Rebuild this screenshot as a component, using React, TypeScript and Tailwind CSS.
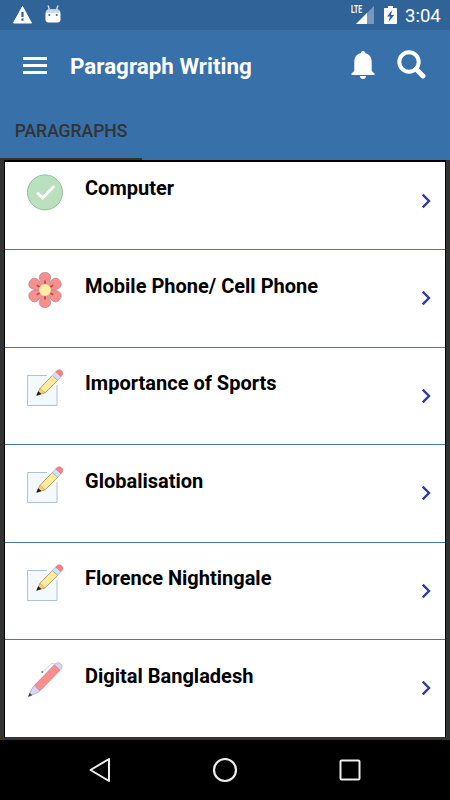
import React from 'react';

type IconName = 'check' | 'flower' | 'note' | 'pen';

const paragraphs: { title: string; icon: IconName }[] = [
  { title: 'Computer', icon: 'check' },
  { title: 'Mobile Phone/ Cell Phone', icon: 'flower' },
  { title: 'Importance of Sports', icon: 'note' },
  { title: 'Globalisation', icon: 'note' },
  { title: 'Florence Nightingale', icon: 'note' },
  { title: 'Digital Bangladesh', icon: 'pen' },
];

function CheckIcon() {
  return (
    <svg width="40" height="40" viewBox="0 0 40 40" fill="none">
      <circle cx="20" cy="19.4" r="17.5" fill="#bae0bd" stroke="#8fc2a0" />
      <path d="M12 19.400l5.600 5.600L29.300 13" stroke="#fff" strokeWidth="2.8" />
    </svg>
  );
}

function FlowerIcon() {
  const angles = [0, 60, 120, 180, 240, 300];
  return (
    <svg width="40" height="40" viewBox="0 0 40 40">
      {angles.map((a) => (
        <g key={a} transform={`rotate(${a} 20 20)`}>
          <path
            d="M20 18C17 14 14.400 10.800 14.400 7.500C14.400 4.300 16.800 2.400 20 2.400C23.200 2.400 25.600 4.300 25.600 7.500C25.600 10.800 23 14 20 18Z"
            fill="#f78f8f"
            stroke="#c08088"
            strokeWidth="0.7"
          />
          <path d="M20 10.500v4" stroke="#c74343" strokeWidth="1.700" />
        </g>
      ))}
      <circle cx="20" cy="20" r="6" fill="#ffeea3" stroke="#f0b080" strokeWidth="0.5" />
    </svg>
  );
}

function NoteIcon() {
  return (
    <svg width="40" height="40" viewBox="0 0 40 40" fill="none">
      <path d="M2.500 7.500h29.500v30H2.500z" fill="#f3f9fd" />
      <path d="M23 7.500H2.500v30H32V17" stroke="#aac4d6" />
      <path d="M22 7h10.500v10" stroke="#fff" strokeWidth="2" />
      <path d="M15 20.300L27.300 7.500l5.500 4.800-12.600 12.400-8.200 2.500z" fill="#ffeb9c" stroke="#a9884f" strokeWidth="0.8" />
      <path d="M15 20.300l5.200 4.400-8.200 2.500z" fill="#f5ce85" stroke="#a9884f" strokeWidth="0.4" />
      <path d="M13.200 23.300l3.300 2.600-5.300 1.900z" fill="#1d1d25" />
      <path d="M27.300 7.500l3.400-3.700 5.300 4.900-3.200 3.600z" fill="#cfe0f5" stroke="#9cb5cb" strokeWidth="0.6" />
      <path d="M30.700 3.800l1.500-1.300c1.500-1.100 3.200-.9 4.500.4 1.300 1.300 1.500 2.900.4 4.400l-1.100 1.400z" fill="#f77f85" stroke="#d2767b" strokeWidth="0.6" />
    </svg>
  );
}

function PenIcon() {
  return (
    <svg width="40" height="40" viewBox="0 0 40 40" fill="none">
      <path d="M29.300 5c1.700-2.500 4.100-2.900 6.200-1.300 2.300 1.800 2 4.300-.5 6.600z" fill="#dcd5f2" stroke="#a597c7" strokeWidth="0.6" />
      <path d="M9.300 25.500L29.300 5l5.700 5.300L15 30.800z" fill="#f98f8f" stroke="#bd7587" strokeWidth="0.7" />
      <path d="M9.300 25.500C6.800 28 5.500 31.500 4.300 35.500c3.900-.8 8.200-2.200 10.700-4.700z" fill="#dcd5f2" stroke="#a597c7" strokeWidth="0.7" />
      <path d="M4.800 33.300L3.400 36.600l3.300-1.300z" fill="#34343f" stroke="#34343f" strokeWidth="0.5" />
      <path d="M30.500 4.500c-1.400-1.700-3.200-1.700-4.700-.3L17.500 12" stroke="#cdc7da" strokeWidth="0.9" />
      <circle cx="17.300" cy="12" r="1" fill="#78708c" />
    </svg>
  );
}

const icons: Record<IconName, () => React.JSX.Element> = {
  check: CheckIcon,
  flower: FlowerIcon,
  note: NoteIcon,
  pen: PenIcon,
};

function StatusBar() {
  return (
    <div className="h-[30px] bg-[#306498] flex items-center justify-between pl-3 pr-[10px]">
      <div className="flex items-center gap-3">
        <svg width="21" height="20" viewBox="0 0 21 20">
          <path d="M10.500 1.500L19.500 18H1.500z" fill="#fff" stroke="#fff" strokeLinejoin="round" />
          <path d="M9.400 7h2.200v5H9.400zM9.400 13.500h2.200v2.200H9.400z" fill="#306498" />
        </svg>
        <svg width="16" height="20" viewBox="0 0 16 20">
          <path d="M3 .5l1.500 4M13 .5l-1.500 4" stroke="#dbe6f0" strokeWidth="1.300" />
          <path d="M.500 9c0-3 1.500-4.500 3.500-4.500h8c2 0 3.500 1.500 3.500 4.500v5.500c0 1.800-1.200 3-3 3h-9c-1.800 0-3-1.200-3-3z" fill="#fff" />
          <path d="M.700 7.800C1.200 5.500 2.300 4.300 4 4.300h8c1.700 0 2.800 1.200 3.300 3.500z" fill="#c5d7e8" />
          <circle cx="4.300" cy="10" r="1" fill="#306498" />
          <circle cx="11.700" cy="10" r="1" fill="#306498" />
        </svg>
      </div>
      <div className="flex items-center">
        <div className="flex items-start mr-[10px]">
          <span className="w-[5px] -mt-px text-white text-[10px] leading-[12px] font-bold origin-left scale-x-[.68] whitespace-nowrap">LTE</span>
          <svg width="18" height="20" viewBox="0 0 18 20">
            <path d="M18 1v18H0z" fill="#7699bc" />
            <path d="M11 8v11H0z" fill="#fff" />
            <path d="M0 0h8v9.500H0z" fill="none" />
          </svg>
        </div>
        <svg width="13" height="20" viewBox="0 0 13 20" className="mr-2">
          <path d="M4 1h5v2h3c.6 0 1 .4 1 1v14c0 .6-.4 1-1 1H1c-.6 0-1-.4-1-1V4c0-.6.400-1 1-1h3z" fill="#fff" />
          <path d="M8.300 5L3 11.500h3L4.500 17l5.700-7H7z" fill="#306498" />
        </svg>
        <span className="mt-px text-white text-[18.500px] leading-5 w-[35px]">3:04</span>
      </div>
    </div>
  );
}

function Header() {
  return (
    <header className="h-[130px] bg-[#3870a9] flex flex-col">
      <div className="h-[70px] flex items-center pl-[23px] pr-[24px]">
        <div className="w-6 flex flex-col gap-1">
          <div className="h-[3px] bg-white" />
          <div className="h-[3px] bg-white" />
          <div className="h-[3px] bg-white" />
        </div>
        <h1 className="ml-[23px] mt-[3px] flex-1 whitespace-nowrap text-white font-bold text-[22.400px]">Paragraph Writing</h1>
        <svg width="24" height="28" viewBox="0 0 24 28" fill="#fff" className="mr-[22px]">
          <path d="M12 0c1.300 0 2 .9 2 2.100 4.300 1 6.700 4.300 6.700 9V20l2.800 2.400V24H.5v-1.600L3.300 20v-8.900c0-4.700 2.400-8 6.700-9C10 .9 10.700 0 12 0z" />
          <path d="M8.800 25h6.400c-.3 1.800-1.500 3-3.200 3s-2.900-1.200-3.200-3z" />
        </svg>
        <svg width="29" height="29" viewBox="0 0 29 29" fill="none" stroke="#fff" className="-mt-px">
          <circle cx="12" cy="12" r="9.700" strokeWidth="4" />
          <path d="M19 19l7 7" strokeWidth="4.800" strokeLinecap="round" />
        </svg>
      </div>
      <div className="flex-1 w-[142px] pt-[5px] border-b-2 border-[#333] flex items-center justify-center text-[17.500px] font-medium text-[#333]">
        PARAGRAPHS
      </div>
    </header>
  );
}

function Row({ title, icon }: { title: string; icon: IconName }) {
  const Icon = icons[icon];
  return (
    <li className="h-[97.500px] border-b border-[#4878a6] last:border-[#123a63] flex pl-5 pr-3">
      <div className="mt-5">
        <Icon />
      </div>
      <span className="ml-5 mt-[20.500px] flex-1 text-[20px] leading-[30px] font-bold text-black">{title}</span>
      <svg width="13" height="16" viewBox="0 0 13 16" fill="none" className="self-center">
        <path d="M2.700 1.700L9 8l-6.300 6.300" stroke="#303b9b" strokeWidth="2.400" />
      </svg>
    </li>
  );
}

function NavigationBar() {
  return (
    <nav className="h-[60px] px-[37px] bg-black flex items-center justify-around">
      <svg width="26" height="26" viewBox="0 0 26 26" fill="none" stroke="#eee" strokeWidth="2" strokeLinejoin="round">
        <path d="M22 2v22L3.500 13z" />
      </svg>
      <svg width="26" height="26" viewBox="0 0 26 26" fill="none" stroke="#eee" strokeWidth="2.200">
        <circle cx="13" cy="13" r="11" />
      </svg>
      <svg width="26" height="26" viewBox="0 0 26 26" fill="none" stroke="#eee" strokeWidth="2">
        <rect x="3.500" y="3.500" width="19" height="19" rx="1" />
      </svg>
    </nav>
  );
}

export default function App() {
  return (
    <div className="w-[450px] h-[800px] overflow-hidden flex flex-col bg-[#333] font-['Roboto',sans-serif]">
      <StatusBar />
      <Header />
      <main className="h-[580px] px-1 pb-0.5">
        <div className="h-[578px] w-[442px] border-x border-t-2 border-black bg-white overflow-hidden">
          <ul className="-mt-[9.500px]">
            {paragraphs.map((p) => (
              <Row key={p.title} title={p.title} icon={p.icon} />
            ))}
          </ul>
        </div>
      </main>
      <NavigationBar />
    </div>
  );
}
